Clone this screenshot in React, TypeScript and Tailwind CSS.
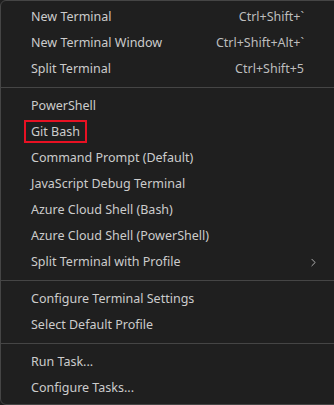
import { ChevronRight } from "lucide-react";

type Item = { label: string; keys?: string; sub?: boolean; marked?: boolean };

const groups: Item[][] = [
  [
    { label: "New Terminal", keys: "Ctrl+Shift+`" },
    { label: "New Terminal Window", keys: "Ctrl+Shift+Alt+`" },
    { label: "Split Terminal", keys: "Ctrl+Shift+5" },
  ],
  [
    { label: "PowerShell" },
    { label: "Git Bash", marked: true },
    { label: "Command Prompt (Default)" },
    { label: "JavaScript Debug Terminal" },
    { label: "Azure Cloud Shell (Bash)" },
    { label: "Azure Cloud Shell (PowerShell)" },
    { label: "Split Terminal with Profile", sub: true },
  ],
  [{ label: "Configure Terminal Settings" }, { label: "Select Default Profile" }],
  [{ label: "Run Task..." }, { label: "Configure Tasks..." }],
];

function Row({ item }: { item: Item }) {
  return (
    <div className="flex items-center h-[26px] pl-[30px] text-[12.5px] text-[#cccccc]">
      <span className="flex-1">
        {item.marked ? (
          <span className="-ml-[7px] px-[5px] py-[1px] border-2 border-[#e81123]">{item.label}</span>
        ) : (
          item.label
        )}
      </span>
      {item.keys && <span className="text-[#bdbdbd]">{item.keys}</span>}
      <span className="w-[35px] shrink-0 flex items-center">
        {item.sub && <ChevronRight size={13} strokeWidth={1.5} className="text-[#cccccc] ml-[3px]" />}
      </span>
    </div>
  );
}

export default function App() {
  return (
    <div className="w-[334px] h-[405px] bg-[#1f1f1f] overflow-hidden">
      <div
        className="w-[340px] h-[405px] bg-[#1f1f1f] border border-[#454545] rounded-[6px] pt-[3px]"
        style={{ fontFamily: '"Noto Sans", sans-serif' }}
      >
        {groups.map((g, i) => (
          <div key={i}>
            {i > 0 && (
              <div className="h-[11px] pt-[5px]">
                <div className="w-full h-px bg-[#454545]" />
              </div>
            )}
            {g.map((item) => (
              <Row key={item.label} item={item} />
            ))}
          </div>
        ))}
      </div>
    </div>
  );
}
